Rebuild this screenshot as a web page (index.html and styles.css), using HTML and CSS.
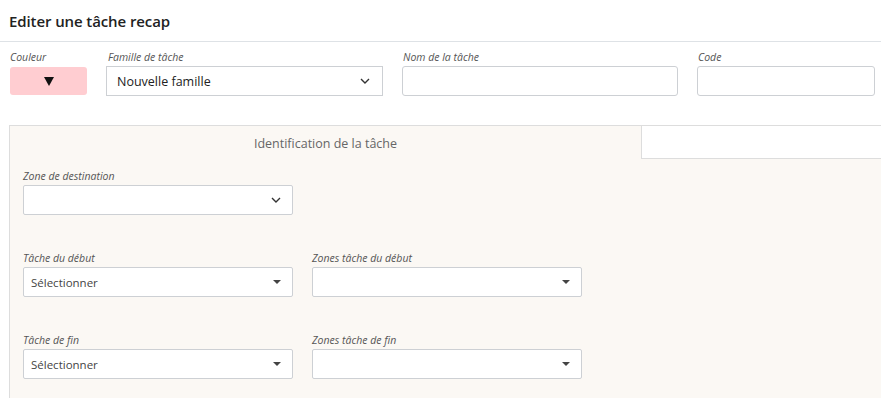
FILE: index.html
```html
<!DOCTYPE html>
<html lang="fr">
<head>
<meta charset="utf-8">
<title>Editer une tâche recap</title>
<link rel="stylesheet" href="styles.css">
</head>
<body>
<header class="page-header">
  <h1 class="page-title">Editer une tâche recap</h1>
</header>
<div class="top-row">
  <div class="field f-color">
    <label class="lbl">Couleur</label>
    <div class="color-box"><svg width="10" height="9" viewBox="0 0 10 9"><polygon points="0,0 10,0 5,9" fill="#111"/></svg></div>
  </div>
  <div class="field f-family">
    <label class="lbl">Famille de tâche</label>
    <div class="ctrl select-ctrl">
      <span class="val-lg">Nouvelle famille</span>
      <svg class="chev" width="10" height="6" viewBox="0 0 10 6"><polyline points="1,1 5,5 9,1" fill="none" stroke="#333" stroke-width="1.4"/></svg>
    </div>
  </div>
  <div class="field f-name">
    <label class="lbl">Nom de la tâche</label>
    <div class="ctrl input-ctrl"></div>
  </div>
  <div class="field f-code">
    <label class="lbl">Code</label>
    <div class="ctrl input-ctrl"></div>
  </div>
</div>

<section class="panel">
  <div class="tabs">
    <div class="tab tab-active">Identification de la tâche</div>
    <div class="tab tab-empty"></div>
  </div>
  <div class="panel-body">
    <div class="frow">
      <div class="field f-sel">
        <label class="lbl">Zone de destination</label>
        <div class="ctrl select-ctrl">
          <span class="val-sm"></span>
          <svg class="chev" width="10" height="6" viewBox="0 0 10 6"><polyline points="1,1 5,5 9,1" fill="none" stroke="#333" stroke-width="1.4"/></svg>
        </div>
      </div>
    </div>
    <div class="frow">
      <div class="field f-sel">
        <label class="lbl">Tâche du début</label>
        <div class="ctrl select-ctrl s2">
          <span class="val-sm">Sélectionner</span>
          <span class="caret"></span>
        </div>
      </div>
      <div class="field f-sel">
        <label class="lbl">Zones tâche du début</label>
        <div class="ctrl select-ctrl s2">
          <span class="val-sm"></span>
          <span class="caret"></span>
        </div>
      </div>
    </div>
    <div class="frow">
      <div class="field f-sel">
        <label class="lbl">Tâche de fin</label>
        <div class="ctrl select-ctrl s2">
          <span class="val-sm">Sélectionner</span>
          <span class="caret"></span>
        </div>
      </div>
      <div class="field f-sel">
        <label class="lbl">Zones tâche de fin</label>
        <div class="ctrl select-ctrl s2">
          <span class="val-sm"></span>
          <span class="caret"></span>
        </div>
      </div>
    </div>
  </div>
</section>
</body>
</html>
```
FILE: styles.css
```css
html, body {
  margin: 0;
  padding: 0;
  background: #ffffff;
  overflow: hidden;
}
body {
  font-family: "Open Sans", "Noto Sans", "Liberation Sans", sans-serif;
  color: #333;
  width: 881px;
  height: 398px;
}
.page-header {
  height: 42px;
  border-bottom: 1px solid #dee2e6;
  box-sizing: border-box;
  padding: 0 9px;
  display: flex;
  align-items: center;
}
.page-title {
  margin: 0;
  font-size: 15px;
  font-weight: 600;
  color: #222;
  letter-spacing: -0.1px;
}
.top-row {
  display: flex;
  padding: 7px 0 0 9px;
  height: 83px;
  box-sizing: border-box;
}
.field {
  display: flex;
  flex-direction: column;
}
.lbl {
  font-size: 10.5px;
  font-style: italic;
  color: #555;
  line-height: 17px;
  height: 17px;
  padding-left: 1px;
  white-space: nowrap;
}
.f-color { width: 78px; margin-right: 19px; }
.f-family { width: 277px; margin-right: 19px; }
.f-name { width: 276px; margin-right: 19px; }
.f-code { width: 178px; }
.f-family .lbl { padding-left: 2px; }
.color-box {
  margin-left: 1px;
  height: 28px;
  background: #ffcdd1;
  border-radius: 3px;
  display: flex;
  align-items: center;
  justify-content: center;
  margin-top: 1px;
}
.color-box svg { margin-top: 1px; margin-left: 1px; }
.ctrl {
  height: 30px;
  box-sizing: border-box;
  border: 1px solid #cdd0d4;
  background: #fff;
  display: flex;
  align-items: center;
  border-radius: 3px;
}
.select-ctrl {
  justify-content: space-between;
  padding: 0 11px 0 10px;
  border-radius: 2px;
}
.f-family .select-ctrl { padding-right: 12px; border-radius: 0; }
.val-lg {
  font-size: 12.5px;
  color: #222;
}
.val-sm {
  font-size: 11.5px;
  color: #444;
}
.s2 { padding: 0 11px 0 7px; }
.caret {
  width: 0;
  height: 0;
  border-left: 4px solid transparent;
  border-right: 4px solid transparent;
  border-top: 4px solid #444;
}
.panel {
  margin-left: 9px;
  border-left: 1px solid #dddddd;
  border-top: 1px solid #dddddd;
  background: #fbf8f4;
  height: 273px;
}
.tabs {
  display: flex;
  height: 33px;
}
.tab {
  box-sizing: border-box;
  display: flex;
  align-items: center;
  justify-content: center;
  font-size: 12.5px;
  color: #666;
}
.tab-active {
  width: 631px;
  padding-top: 2px;
}
.tab-empty {
  flex: 1;
  background: #fff;
  border-left: 1px solid #dddddd;
  border-bottom: 1px solid #dddddd;
}
.panel-body {
  padding: 9px 0 0 13px;
}
.frow {
  display: flex;
  gap: 19px;
  margin-bottom: 35px;
}
.f-sel { width: 270px; }
.f-sel .lbl { padding-left: 0; }
```
